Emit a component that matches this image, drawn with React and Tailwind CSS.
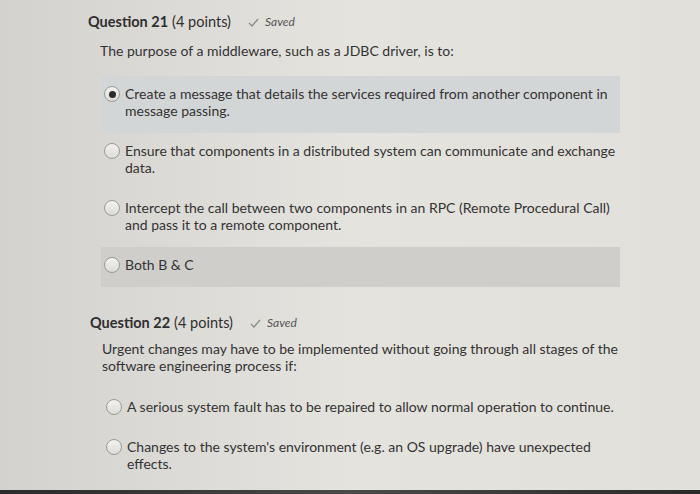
import React from 'react';

const questions = [
  {
    number: 21,
    points: 4,
    prompt: 'The purpose of a middleware, such as a JDBC driver, is to:',
    selected: 0,
    hovered: 3,
    options: [
      'Create a message that details the services required from another component in message passing.',
      'Ensure that components in a distributed system can communicate and exchange data.',
      'Intercept the call between two components in an RPC (Remote Procedural Call) and pass it to a remote component.',
      'Both B & C',
    ],
  },
  {
    number: 22,
    points: 4,
    prompt:
      'Urgent changes may have to be implemented without going through all stages of the software engineering process if:',
    selected: -1,
    hovered: -1,
    options: [
      'A serious system fault has to be repaired to allow normal operation to continue.',
      "Changes to the system's environment (e.g. an OS upgrade) have unexpected effects.",
    ],
  },
];

function Radio({ checked }) {
  return (
    <span className="mt-[1px] flex h-[16px] w-[16px] shrink-0 items-center justify-center rounded-full border border-[#9a9a98] bg-gradient-to-b from-[#f4f3f0] to-[#dcdbd7]">
      {checked && <span className="h-[7px] w-[7px] rounded-full bg-[#2b2b2b]" />}
    </span>
  );
}

function Question({ q, first }) {
  return (
    <div className={first ? 'pl-[88px] pr-[76px]' : 'mt-[26px] pl-[90px] pr-[70px]'}>
      <div className="flex items-center text-[14.5px] leading-[20px] text-[#2f2f2f]">
        <span className="font-bold">Question {q.number}</span>
        <span className="ml-[4px]">({q.points} points)</span>
        <span className="ml-[17px] flex items-center gap-[6px] text-[12px] italic text-[#555]">
          <svg width="11" height="9" viewBox="0 0 11 9" fill="none">
            <path d="M1 5l3 3 6-7" stroke="#8a8a8a" strokeWidth="1.3" />
          </svg>
          Saved
        </span>
      </div>
      <p
        className={`pl-[12px] text-[14px] leading-[17px] text-[#333] ${
          first ? 'mt-[10px]' : 'mt-[7px]'
        }`}
      >
        {q.prompt}
      </p>
      <div className={first ? 'mt-[17px] mr-[4px]' : 'mt-[15px]'}>
        {q.options.map((opt, i) => (
          <div
            key={i}
            className={`ml-[13px] flex gap-[5px] pt-[9px] pb-[14px] pl-[3px] ${
              i === q.selected ? 'bg-[#d3d6d7]' : i === q.hovered ? 'bg-[#cfcecb]' : ''
            }`}
          >
            <Radio checked={i === q.selected} />
            <span className="text-[14px] leading-[17px] text-[#333]">{opt}</span>
          </div>
        ))}
      </div>
    </div>
  );
}

export default function App() {
  return (
    <div
      className="flex h-[494px] w-[700px] flex-col overflow-hidden bg-gradient-to-r from-[#d4d2ce] via-[#e5e3de] to-[#e2e0db] pt-[12px]"
      style={{ fontFamily: 'Lato, "Open Sans", sans-serif' }}
    >
      {questions.map((q, i) => (
        <Question key={q.number} q={q} first={i === 0} />
      ))}
      <div className="mt-auto h-[4px] bg-gradient-to-r from-[#2a2a2a] via-[#4a4a4a] to-[#2a2a2a]" />
    </div>
  );
}
